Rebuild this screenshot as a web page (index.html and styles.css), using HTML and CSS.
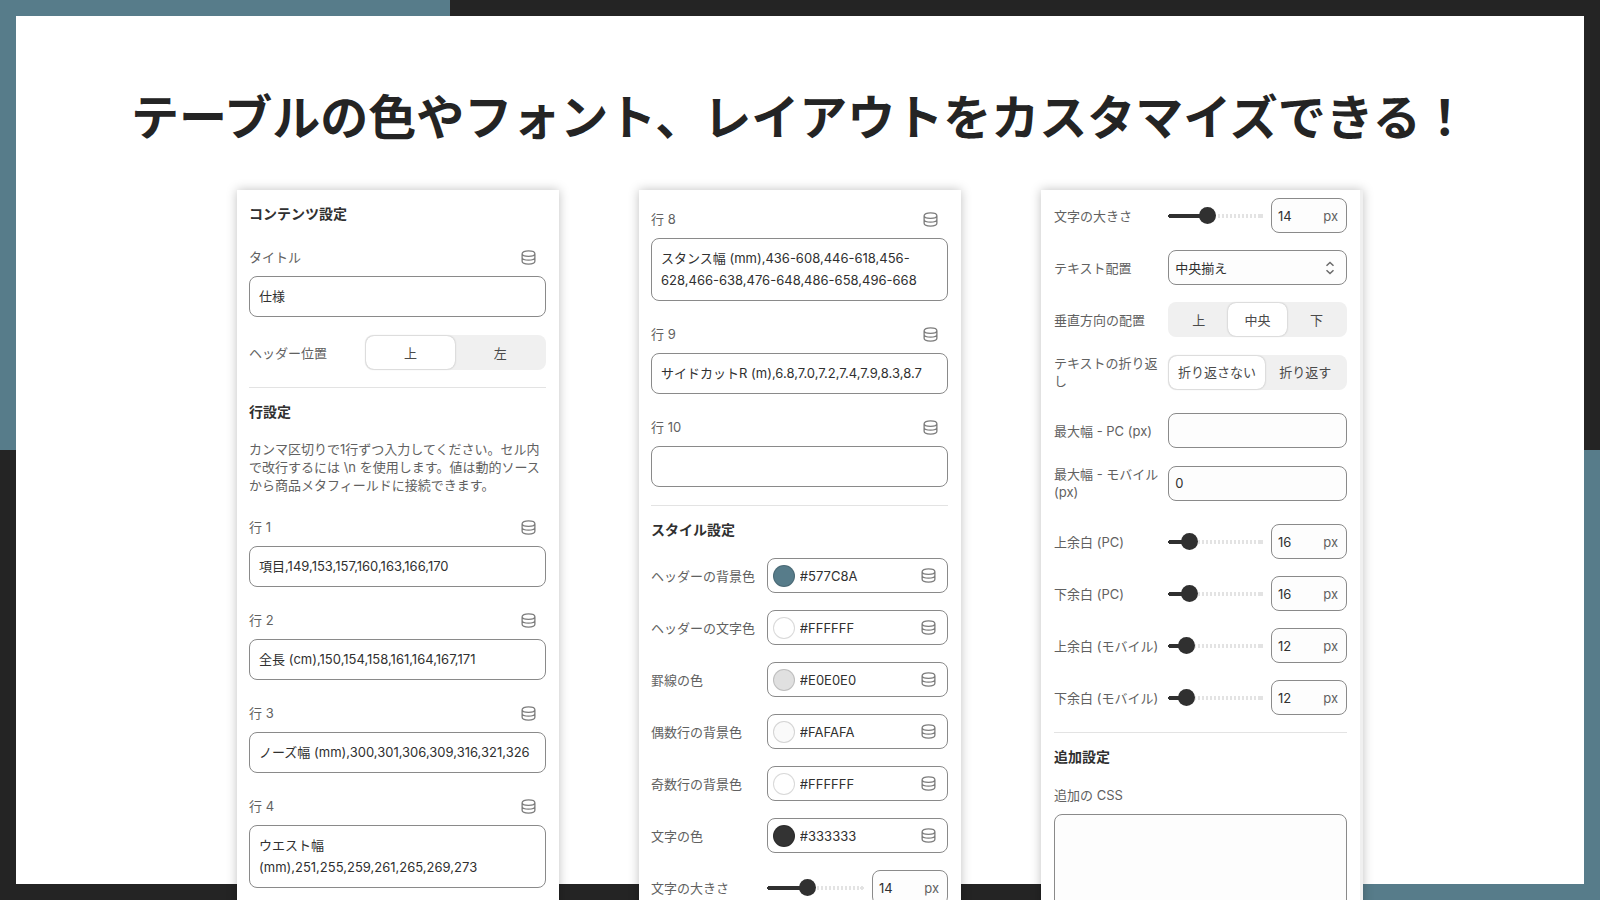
FILE: index.html
```html
<!DOCTYPE html>
<html lang="ja">
<head>
    <meta charset="UTF-8">
    <meta name="viewport" content="width=device-width, initial-scale=1.0">
    <title>テーブルのカスタマイズ</title>
    <link rel="stylesheet" href="styles.css">
</head>
<body>

    <!-- Shared icon -->
    <svg class="sprite" aria-hidden="true">
        <symbol id="db" viewBox="0 0 16 16">
            <path d="M1.2 4C1.200 2.200 4 1 8 1s6.800 1.200 6.800 3-2.800 2.700-6.800 2.700S1.200 5.800 1.200 4zM1.200 4v8c0 2 2.400 3 6.800 3s6.800-1 6.800-3V4M1.200 8c.2 1.900 2.800 2.800 6.800 2.800s6.600-.9 6.800-2.800"/>
        </symbol>
    </svg>

    <div class="page">
        <h1>テーブルの色やフォント、レイアウトをカスタマイズできる！</h1>

        <div class="panels">
            <!-- Content and rows -->
            <section class="panel">
                <h2>コンテンツ設定</h2>
                <div class="field">
                    <div class="field-head"><label for="title">タイトル</label><svg class="db"><use href="#db"/></svg></div>
                    <input class="box" type="text" id="title" value="仕様">
                </div>
                <div class="row">
                    <span class="label">ヘッダー位置</span>
                    <div class="segment">
                        <button type="button" class="active">上</button>
                        <button type="button">左</button>
                    </div>
                </div>
                <hr>
                <h2>行設定</h2>
                <p class="help">カンマ区切りで1行ずつ入力してください。セル内で改行するには \n を使用します。値は動的ソースから商品メタフィールドに接続できます。</p>
                <div class="field">
                    <div class="field-head"><label for="row1">行 1</label><svg class="db"><use href="#db"/></svg></div>
                    <textarea class="box" id="row1" rows="1">項目,149,153,157,160,163,166,170</textarea>
                </div>
                <div class="field">
                    <div class="field-head"><label for="row2">行 2</label><svg class="db"><use href="#db"/></svg></div>
                    <textarea class="box" id="row2" rows="1">全長 (cm),150,154,158,161,164,167,171</textarea>
                </div>
                <div class="field">
                    <div class="field-head"><label for="row3">行 3</label><svg class="db"><use href="#db"/></svg></div>
                    <textarea class="box" id="row3" rows="1">ノーズ幅 (mm),300,301,306,309,316,321,326</textarea>
                </div>
                <div class="field">
                    <div class="field-head"><label for="row4">行 4</label><svg class="db"><use href="#db"/></svg></div>
                    <textarea class="box" id="row4" rows="2">ウエスト幅 (mm),251,255,259,261,265,269,273</textarea>
                </div>
            </section>

            <!-- Rows and style -->
            <section class="panel style">
                <div class="field">
                    <div class="field-head"><label for="row8">行 8</label><svg class="db"><use href="#db"/></svg></div>
                    <textarea class="box" id="row8" rows="2">スタンス幅 (mm),436-608,446-618,456-628,466-638,476-648,486-658,496-668</textarea>
                </div>
                <div class="field">
                    <div class="field-head"><label for="row9">行 9</label><svg class="db"><use href="#db"/></svg></div>
                    <textarea class="box" id="row9" rows="1">サイドカットR (m),6.8,7.0,7.2,7.4,7.9,8.3,8.7</textarea>
                </div>
                <div class="field">
                    <div class="field-head"><label for="row10">行 10</label><svg class="db"><use href="#db"/></svg></div>
                    <textarea class="box" id="row10" rows="1"></textarea>
                </div>
                <hr>
                <h2>スタイル設定</h2>
                <div class="row">
                    <label for="headBg">ヘッダーの背景色</label>
                    <div class="color"><span class="swatch" style="background: #577C8A"></span><input type="text" id="headBg" value="#577C8A"><svg class="db"><use href="#db"/></svg></div>
                </div>
                <div class="row">
                    <label for="headText">ヘッダーの文字色</label>
                    <div class="color"><span class="swatch" style="background: #FFFFFF"></span><input type="text" id="headText" value="#FFFFFF"><svg class="db"><use href="#db"/></svg></div>
                </div>
                <div class="row">
                    <label for="lineColor">罫線の色</label>
                    <div class="color"><span class="swatch" style="background: #E0E0E0"></span><input type="text" id="lineColor" value="#E0E0E0"><svg class="db"><use href="#db"/></svg></div>
                </div>
                <div class="row">
                    <label for="evenBg">偶数行の背景色</label>
                    <div class="color"><span class="swatch" style="background: #FAFAFA"></span><input type="text" id="evenBg" value="#FAFAFA"><svg class="db"><use href="#db"/></svg></div>
                </div>
                <div class="row">
                    <label for="oddBg">奇数行の背景色</label>
                    <div class="color"><span class="swatch" style="background: #FFFFFF"></span><input type="text" id="oddBg" value="#FFFFFF"><svg class="db"><use href="#db"/></svg></div>
                </div>
                <div class="row">
                    <label for="textColor">文字の色</label>
                    <div class="color"><span class="swatch" style="background: #333333"></span><input type="text" id="textColor" value="#333333"><svg class="db"><use href="#db"/></svg></div>
                </div>
                <div class="row">
                    <label for="size">文字の大きさ</label>
                    <div class="slider">
                        <input type="range" id="size" min="10" max="20" value="14" style="--fill: 40%">
                        <div class="unit"><input type="text" aria-label="文字の大きさ" value="14"><span>px</span></div>
                    </div>
                </div>
            </section>

            <!-- Layout and extra CSS -->
            <section class="panel scroll">
                <div class="row">
                    <label for="size2">文字の大きさ</label>
                    <div class="slider">
                        <input type="range" id="size2" min="10" max="20" value="14" style="--fill: 40%">
                        <div class="unit"><input type="text" aria-label="文字の大きさ" value="14"><span>px</span></div>
                    </div>
                </div>
                <div class="row">
                    <label for="align">テキスト配置</label>
                    <div class="select">
                        <select id="align">
                            <option>中央揃え</option>
                        </select>
                        <svg viewBox="0 0 10 14"><path d="M1.500 4.800L5 1.500l3.500 3.300M1.500 9.200L5 12.500l3.500-3.300"/></svg>
                    </div>
                </div>
                <div class="row">
                    <span class="label">垂直方向の配置</span>
                    <div class="segment">
                        <button type="button">上</button>
                        <button type="button" class="active">中央</button>
                        <button type="button">下</button>
                    </div>
                </div>
                <div class="row wrapped">
                    <span class="label">テキストの折り返し</span>
                    <div class="segment wrap-mode">
                        <button type="button" class="active">折り返さない</button>
                        <button type="button">折り返す</button>
                    </div>
                </div>
                <div class="row">
                    <label for="maxPc">最大幅 - PC (px)</label>
                    <input class="small" type="text" id="maxPc">
                </div>
                <div class="row wrapped">
                    <label for="maxSp">最大幅 - モバイル (px)</label>
                    <input class="small" type="text" id="maxSp" value="0">
                </div>
                <div class="row">
                    <label for="topPc">上余白 (PC)</label>
                    <div class="slider">
                        <input type="range" id="topPc" value="16" style="--fill: 16%">
                        <div class="unit"><input type="text" aria-label="上余白 (PC)" value="16"><span>px</span></div>
                    </div>
                </div>
                <div class="row">
                    <label for="bottomPc">下余白 (PC)</label>
                    <div class="slider">
                        <input type="range" id="bottomPc" value="16" style="--fill: 16%">
                        <div class="unit"><input type="text" aria-label="下余白 (PC)" value="16"><span>px</span></div>
                    </div>
                </div>
                <div class="row">
                    <label for="topSp">上余白 (モバイル)</label>
                    <div class="slider">
                        <input type="range" id="topSp" value="12" style="--fill: 12%">
                        <div class="unit"><input type="text" aria-label="上余白 (モバイル)" value="12"><span>px</span></div>
                    </div>
                </div>
                <div class="row">
                    <label for="bottomSp">下余白 (モバイル)</label>
                    <div class="slider">
                        <input type="range" id="bottomSp" value="12" style="--fill: 12%">
                        <div class="unit"><input type="text" aria-label="下余白 (モバイル)" value="12"><span>px</span></div>
                    </div>
                </div>
                <hr>
                <h2>追加設定</h2>
                <div class="field">
                    <div class="field-head"><label for="css">追加の CSS</label></div>
                    <textarea class="box css" id="css" rows="6"></textarea>
                </div>
            </section>
        </div>
    </div>

</body>
</html>
```
FILE: styles.css
```css
* {
    box-sizing: border-box;
}
body {
    margin: 0;
    height: 100vh;
    overflow: hidden;
    font-family: Inter, "Noto Sans CJK JP", sans-serif;
    font-size: 13px;
    line-height: 18px;
    color: #303030;
    /* white sheet, then the two blue corners, over the dark frame */
    background:
        linear-gradient(#fff, #fff) center / calc(100% - 32px) calc(100% - 32px) no-repeat,
        linear-gradient(#577c8a, #577c8a) left top / 450px 450px no-repeat,
        linear-gradient(#577c8a, #577c8a) right bottom / 450px 450px no-repeat,
        #242424;
}
.sprite {
    display: none;
}
.page {
    padding-top: 78px;
}
h1 {
    margin: 0 0 40px;
    text-align: center;
    font-family: "Noto Sans CJK JP", sans-serif;
    font-size: 48px;
    line-height: 72px;
    font-weight: 700;
    color: #242424;
    white-space: nowrap;
}
.panels {
    display: flex;
    justify-content: center;
    align-items: flex-start;
    gap: 80px;
}
.panel {
    width: 322px;
    min-height: 100vh;
    padding: 14px 13px 20px 12px;
    background: #fff;
    box-shadow: 0 0 10px rgba(0, 0, 0, 0.25);
}
.panel.style {
    padding-top: 19px;
}
.panel.scroll {
    padding: 8px 13px 20px;
    border-right: 3px solid #f0f0f0;
}
h2 {
    margin: 0 0 18px;
    font-size: 14px;
    line-height: 20px;
    font-weight: 700;
}
h2:first-child {
    margin-bottom: 23px;
}
hr {
    height: 1px;
    margin: 17px 0 14px;
    border: 0;
    background: #e3e3e3;
}
label, .label {
    color: #616161;
}
.help {
    margin: 0 0 23px;
    color: #616161;
}
.field {
    margin-bottom: 18px;
}
.field + .field {
    margin-top: 23px;
}
.field-head {
    display: flex;
    justify-content: space-between;
    align-items: center;
    height: 20px;
    margin-bottom: 9px;
    padding-right: 10px;
}
.db {
    flex: none;
    width: 15px;
    height: 15px;
    fill: none;
    stroke: #7d7d7d;
    stroke-width: 1.4;
}
input, textarea, select, button {
    margin: 0;
    font: inherit;
    color: inherit;
}
.box {
    display: block;
    width: 100%;
    padding: 8px 9px 9px;
    border: 1px solid #8a8a8a;
    border-radius: 8px;
    background: #fff;
    line-height: 22px;
    resize: none;
    overflow: hidden;
}
.css {
    background: #fdfdfd;
}
.row {
    display: grid;
    grid-template-columns: 39% 61%;
    align-items: center;
    height: 35px;
    margin-bottom: 17px;
}
.row label, .row .label {
    padding-right: 8px;
}
.row.wrapped {
    margin-bottom: 24px;
}
.segment {
    display: grid;
    grid-auto-flow: column;
    grid-auto-columns: 1fr;
    height: 35px;
    padding: 1px;
    border-radius: 8px;
    background: #f0f0f0;
}
.segment.wrap-mode {
    grid-template-columns: 54% 46%;
}
.segment button {
    padding: 0;
    border: 0;
    border-radius: 8px;
    background: none;
    color: #4a4a4a;
}
.segment .active {
    background: #fff;
    box-shadow: 0 0 2px rgba(0, 0, 0, 0.3);
}
.color, .unit, .small, .select select {
    height: 35px;
    border: 1px solid #8a8a8a;
    border-radius: 8px;
    background: #fdfdfd;
}
.color {
    display: flex;
    align-items: center;
    gap: 5px;
    padding: 0 11px 0 5px;
    background: #fff;
}
.color input, .unit input {
    flex: 1;
    min-width: 0;
    padding: 0;
    border: 0;
    background: none;
}
.swatch {
    width: 22px;
    height: 22px;
    border: 1px solid rgba(0, 0, 0, 0.15);
    border-radius: 50%;
}
.slider {
    display: flex;
    align-items: center;
    gap: 8px;
}
.slider input[type="range"] {
    flex: 1;
    min-width: 0;
    height: 17px;
    -webkit-appearance: none;
    appearance: none;
    /* filled part, round ends, then the ticks */
    background:
        radial-gradient(circle, #303030 2px, transparent 2px) left center / 4px 4px no-repeat,
        linear-gradient(#303030, #303030) 2px center / var(--fill) 4px no-repeat,
        radial-gradient(circle, #e3e3e3 2px, transparent 2px) right center / 4px 4px no-repeat,
        linear-gradient(90deg, transparent 2px, #e3e3e3 2px) left center / 4px 4px repeat-x;
    background-clip: content-box;
}
.slider input[type="range"]::-webkit-slider-thumb {
    -webkit-appearance: none;
    width: 17px;
    height: 17px;
    border-radius: 50%;
    background: #303030;
}
.unit {
    display: flex;
    align-items: center;
    width: 76px;
    padding: 0 8px 0 6px;
}
.unit span {
    color: #616161;
}
.small {
    width: 100%;
    padding: 0 6px;
}
.select {
    display: grid;
    align-items: center;
}
.select select, .select svg {
    grid-area: 1 / 1;
}
.select select {
    width: 100%;
    padding: 0 6px;
    -webkit-appearance: none;
    appearance: none;
}
.select svg {
    justify-self: end;
    width: 10px;
    height: 14px;
    margin-right: 12px;
    fill: none;
    stroke: #6a6a6a;
    stroke-width: 1.5;
    pointer-events: none;
}
```
